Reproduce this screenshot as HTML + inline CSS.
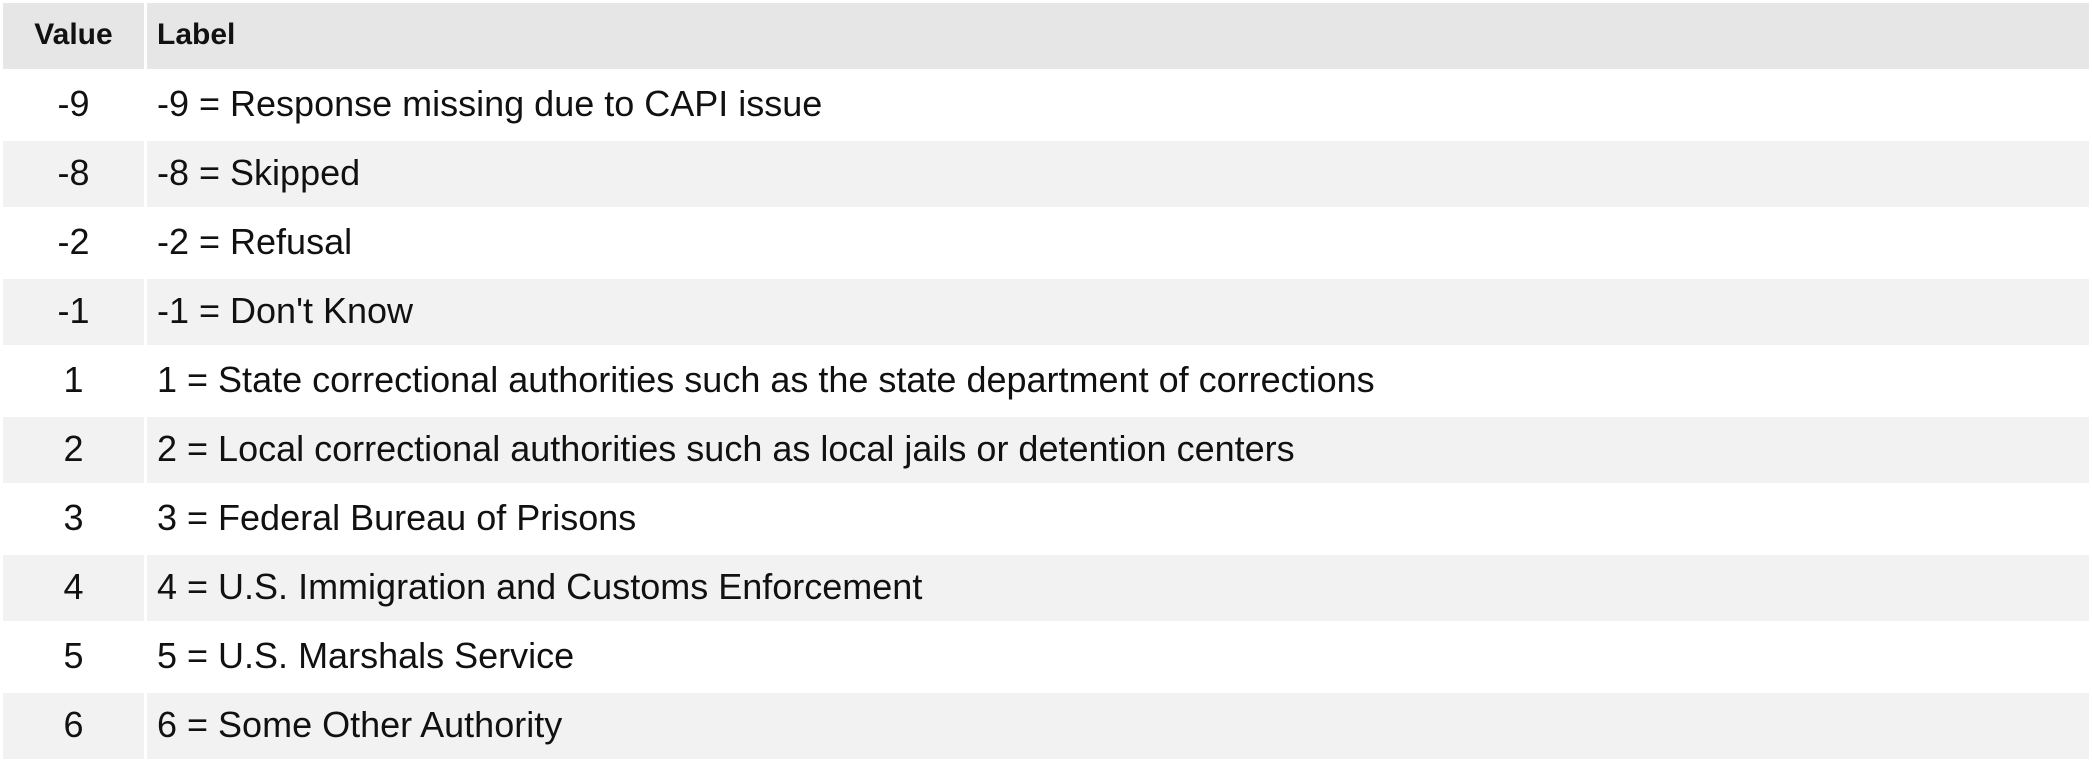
<!DOCTYPE html>
<html><head><meta charset="utf-8"><style>
html,body{margin:0;padding:0;background:#fff;}
body{width:2092px;height:763px;overflow:hidden;font-family:"Liberation Sans",Arial,sans-serif;color:#111;}
table{border-collapse:separate;border-spacing:3px;width:2092px;table-layout:fixed;}
td,th{height:63px;padding:0 0 3px 0;vertical-align:middle;}
th{background:#e6e6e6;font-weight:bold;font-size:30px;text-align:left;padding-left:10px;}
th.v{text-align:center;padding-left:0;}
td{font-size:36px;padding-left:10px;}
td.v{text-align:center;padding-left:0;}
tr:nth-child(odd) td{background:#f2f2f2;}
col.a{width:141px;}
</style></head><body>
<table>
<colgroup><col class="a"><col></colgroup>
<tr><th class="v">Value</th><th>Label</th></tr>
<tr><td class="v">-9</td><td>-9 = Response missing due to CAPI issue</td></tr>
<tr><td class="v">-8</td><td>-8 = Skipped</td></tr>
<tr><td class="v">-2</td><td>-2 = Refusal</td></tr>
<tr><td class="v">-1</td><td>-1 = Don't Know</td></tr>
<tr><td class="v">1</td><td>1 = State correctional authorities such as the state department of corrections</td></tr>
<tr><td class="v">2</td><td>2 = Local correctional authorities such as local jails or detention centers</td></tr>
<tr><td class="v">3</td><td>3 = Federal Bureau of Prisons</td></tr>
<tr><td class="v">4</td><td>4 = U.S. Immigration and Customs Enforcement</td></tr>
<tr><td class="v">5</td><td>5 = U.S. Marshals Service</td></tr>
<tr><td class="v">6</td><td>6 = Some Other Authority</td></tr>
</table>
</body></html>
